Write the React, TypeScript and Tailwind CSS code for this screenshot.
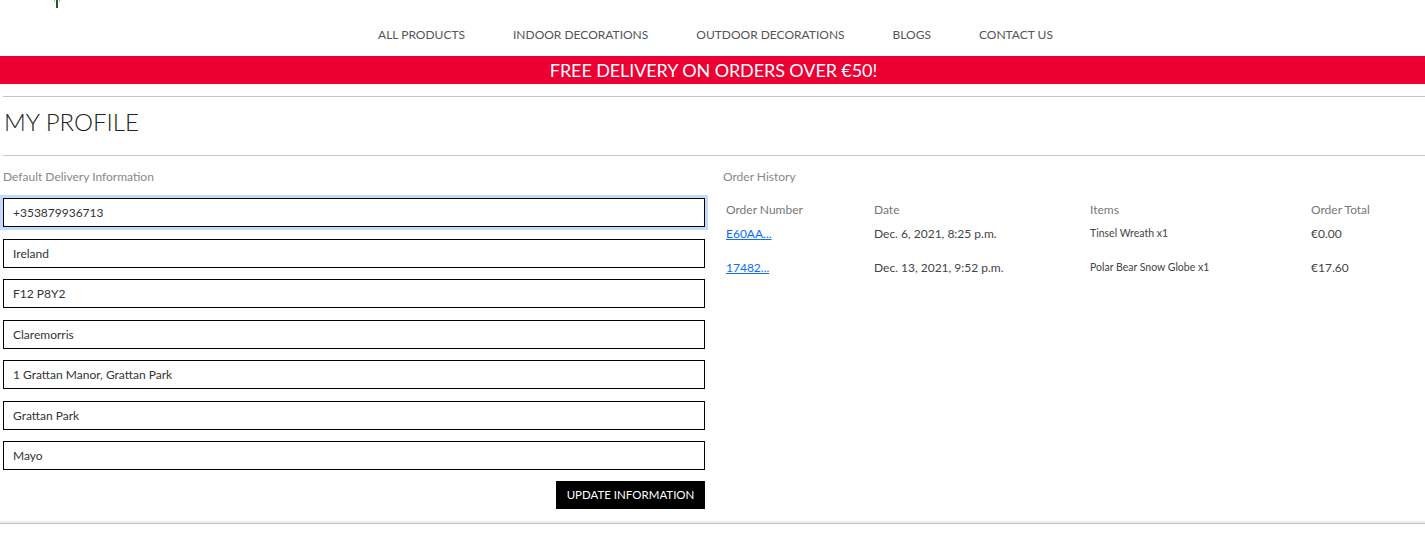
import React from "react";

const font = { fontFamily: "Lato, 'Noto Sans', sans-serif" };

const navLinks = [
  "ALL PRODUCTS",
  "INDOOR DECORATIONS",
  "OUTDOOR DECORATIONS",
  "BLOGS",
  "CONTACT US",
];

const fields = [
  "+353879936713",
  "Ireland",
  "F12 P8Y2",
  "Claremorris",
  "1 Grattan Manor, Grattan Park",
  "Grattan Park",
  "Mayo",
];

const orders = [
  {
    number: "E60AA...",
    date: "Dec. 6, 2021, 8:25 p.m.",
    items: "Tinsel Wreath x1",
    total: "€0.00",
  },
  {
    number: "17482...",
    date: "Dec. 13, 2021, 9:52 p.m.",
    items: "Polar Bear Snow Globe x1",
    total: "€17.60",
  },
];

export default function App() {
  return (
    <div className="w-[1425px] h-[542px] bg-white overflow-hidden" style={font}>
      {/* Header */}
      <header className="h-[56px] flex flex-col">
        <div className="h-[8px] pl-[54px]">
          <svg width="6" height="8" viewBox="0 0 6 8">
            <rect x="0" y="0" width="1" height="2" fill="#a7c4ad" />
            <rect x="2" y="0" width="2" height="8" fill="#1d5a2a" />
            <rect x="5" y="0" width="1" height="2" fill="#a7c4ad" />
          </svg>
        </div>
        <nav className="mt-[19px] flex justify-center gap-[48px] pl-[6px]">
          {navLinks.map((l) => (
            <a key={l} className="text-[12px] leading-[16px] text-[#555] tracking-[0px]">
              {l}
            </a>
          ))}
        </nav>
      </header>

      {/* Banner */}
      <div className="h-[28px] bg-[#ec0034] flex items-center justify-center">
        <span className="text-white text-[18px] leading-[24px] pl-[2px] tracking-[-0.1px]">
          FREE DELIVERY ON ORDERS OVER €50!
        </span>
      </div>

      <div className="ml-[3px] mt-[12px] border-t border-[#c4c4c4]" />
      <h1 className="ml-[4px] mt-[9px] text-[24px] leading-[32px] font-light text-[#222]">
        MY PROFILE
      </h1>
      <div className="ml-[3px] mt-[17px] border-t border-[#c4c4c4]" />

      <div className="flex mt-[13px]">
        {/* Delivery form */}
        <div className="ml-[3px] w-[702px] flex flex-col">
          <p className="text-[12px] leading-[16px] text-[#888]">Default Delivery Information</p>
          <div className="mt-[13px] flex flex-col gap-[11.5px]">
            {fields.map((v, i) => (
              <input
                key={v}
                defaultValue={v}
                className={`h-[29px] w-full border border-black px-[9px] text-[12px] text-[#333] outline-none ${
                  i === 0 ? "ring-[3px] ring-[#c3dafc]" : ""
                }`}
                style={font}
              />
            ))}
          </div>
          <div className="flex justify-end mt-[11px]">
            <button className="h-[28px] w-[149px] bg-black text-white text-[11.5px]" style={font}>
              UPDATE INFORMATION
            </button>
          </div>
        </div>

        {/* Order history */}
        <div className="ml-[18px] flex-1">
          <p className="text-[12px] leading-[16px] text-[#888]">Order History</p>
          <table className="mt-[17px] w-full border-collapse text-left">
            <thead>
              <tr className="text-[12px] text-[#777]">
                <th className="w-[148px] font-normal pl-[3px] leading-[16px] pb-[8px]">Order Number</th>
                <th className="w-[216px] font-normal pl-[3px] leading-[16px] pb-[8px]">Date</th>
                <th className="w-[221px] font-normal pl-[3px] leading-[16px] pb-[8px]">Items</th>
                <th className="font-normal pl-[3px] leading-[16px] pb-[8px]">Order Total</th>
              </tr>
            </thead>
            <tbody>
              {orders.map((o) => (
                <tr key={o.number} className="align-top text-[12px] text-[#444]">
                  <td className="pl-[3px] h-[34px] leading-[16px]">
                    <a className="text-[#0d6efd] underline">{o.number}</a>
                  </td>
                  <td className="pl-[3px] leading-[16px]">{o.date}</td>
                  <td className="pl-[3px] text-[10.5px] leading-[14px]">{o.items}</td>
                  <td className="pl-[3px] leading-[16px]">{o.total}</td>
                </tr>
              ))}
            </tbody>
          </table>
        </div>
      </div>

      <div className="mt-[12px] border-t-2 border-[#ececec]" />
      <div className="border-t border-[#c0c0c0]" />
    </div>
  );
}
